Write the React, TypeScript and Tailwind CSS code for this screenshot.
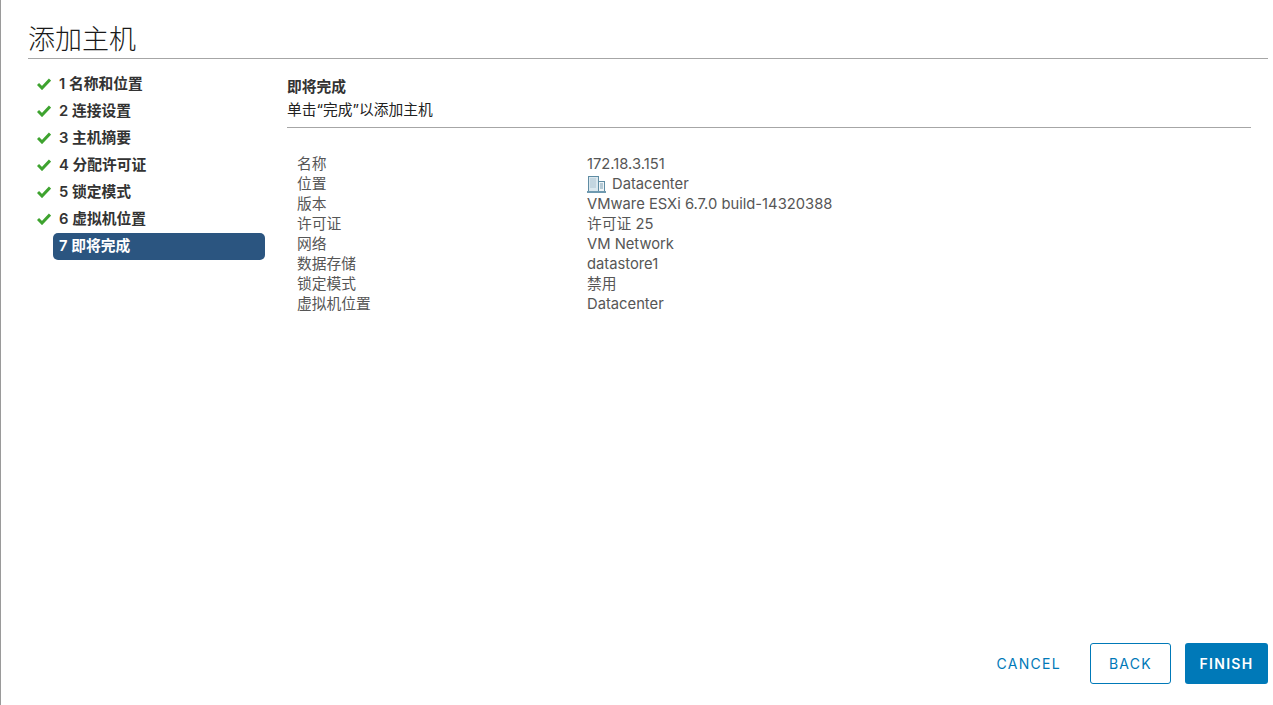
// Add host wizard - final step
const font = "font-['Inter','Noto_Sans_CJK_SC',sans-serif]";

const steps = ["1 名称和位置", "2 连接设置", "3 主机摘要", "4 分配许可证", "5 锁定模式", "6 虚拟机位置"];

const Check = () => (
  <svg viewBox="0 0 14 12" className="w-[14px] h-[12px] shrink-0">
    <path d="M1 6 L5 10 L13 1.6" fill="none" stroke="#3ea32f" strokeWidth="3" />
  </svg>
);

const DatacenterIcon = () => (
  <svg viewBox="0 0 19 17" className="w-[19px] h-[17px] shrink-0">
    <rect x="1.5" y="0.5" width="10" height="15" fill="#dbe8ef" stroke="#5f8ca3" />
    <rect x="11.5" y="5.5" width="6" height="10" fill="#eef4f7" stroke="#5f8ca3" />
    <path d="M3.5 3h6M3.5 5h6M3.5 7h6M3.5 9h6M3.5 11h6" stroke="#7d9fb2" strokeWidth="1" strokeDasharray="1 1" />
    <path d="M13 8h3M13 10h3M13 12h3" stroke="#7d9fb2" strokeWidth="1" />
    <rect x="0" y="15" width="19" height="2" fill="#6f9ab0" />
  </svg>
);

const rows: [string, string][] = [
  ["名称", "172.18.3.151"],
  ["位置", "Datacenter"],
  ["版本", "VMware ESXi 6.7.0 build-14320388"],
  ["许可证", "许可证 25"],
  ["网络", "VM Network"],
  ["数据存储", "datastore1"],
  ["锁定模式", "禁用"],
  ["虚拟机位置", "Datacenter"],
];

export default function App() {
  return (
    <div className={`${font} h-[705px] w-[1273px] flex flex-col bg-white border-l border-[#9a9a9a] pl-[27px] pr-[5px] overflow-hidden`}>
      <h1 className="h-[59px] pt-[21px] border-b border-[#a6a6a6] text-[27px] leading-[38px] font-light text-[#1a1a1a] shrink-0">添加主机</h1>

      <div className="flex flex-1 min-h-0">
        <nav className="w-[237px] shrink-0 pt-[11px] pl-[9px]">
          {steps.map((s) => (
            <div key={s} className="flex items-center h-[27px] gap-[8px] text-[14.75px] font-semibold text-[#333]">
              <Check />
              <span className="mt-[2px]">{s}</span>
            </div>
          ))}
          <div className="mt-px ml-[16px] w-[212px] h-[27px] flex items-center pl-[6px] rounded-[5px] bg-[#2b5580] text-white text-[14.75px] font-semibold">
            7 即将完成
          </div>
        </nav>

        <main className="w-[964px] shrink-0 ml-[22px] pt-[17px]">
          <div className="h-[52px] border-b border-[#a6a6a6] text-[14.75px] leading-[23px] text-[#222]">
            <div className="font-semibold text-[#333]">即将完成</div>
            <div>单击“完成”以添加主机</div>
          </div>
          <div className="mt-[26px] pl-[10px] text-[14.75px] leading-[20px] text-[#565656]">
            {rows.map(([k, v], i) => (
              <div key={k} className="flex h-[20px]">
                <span className="w-[290px] shrink-0">{k}</span>
                <span className="flex items-center gap-[6px]">
                  {i === 1 && <DatacenterIcon />}
                  {v}
                </span>
              </div>
            ))}
          </div>
        </main>
      </div>

      <div className="flex justify-end items-center gap-[14px] pb-[21px] shrink-0 text-[14px] tracking-[1.3px]">
        <button className="h-[41px] px-[15px] text-[#0079b8]">CANCEL</button>
        <button className="h-[41px] w-[81px] border border-[#0079b8] rounded-[3px] text-[#0079b8]">BACK</button>
        <button className="h-[41px] w-[83px] rounded-[3px] bg-[#0079b8] text-white font-semibold">FINISH</button>
      </div>
    </div>
  );
}
